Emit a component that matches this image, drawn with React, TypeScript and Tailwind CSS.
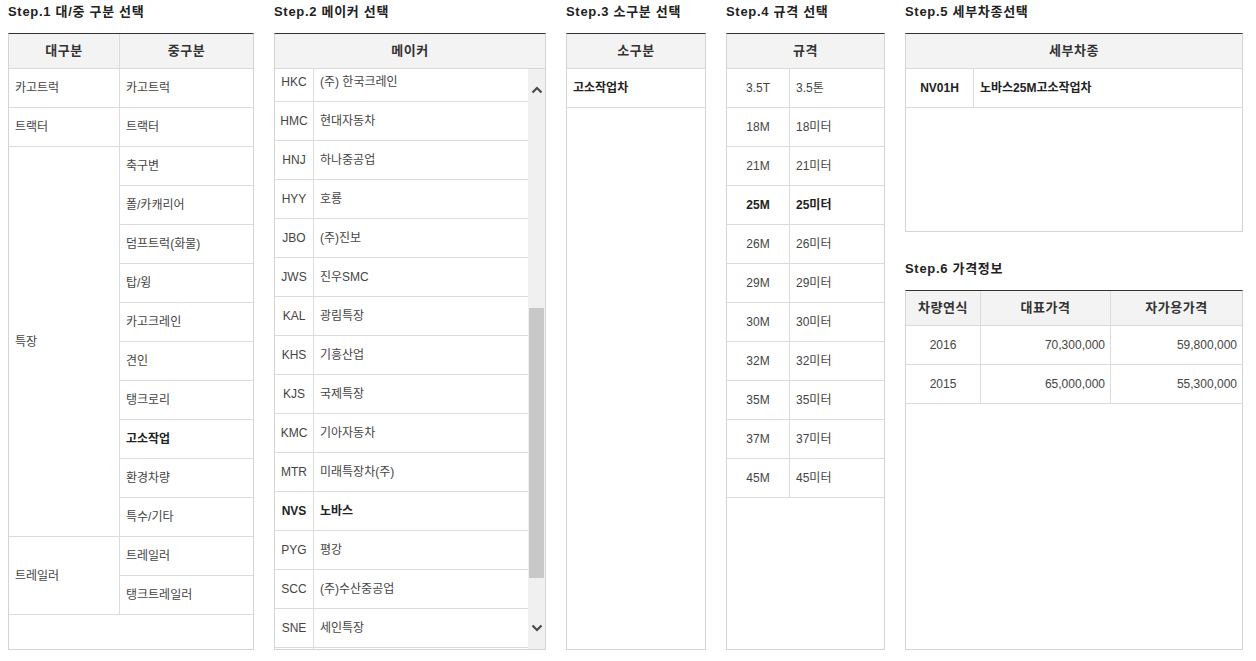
import React from "react";

const step1: { l: string; span: number; items: { t: string; b?: boolean }[] }[] = [
  { l: "카고트럭", span: 1, items: [{ t: "카고트럭" }] },
  { l: "트랙터", span: 1, items: [{ t: "트랙터" }] },
  {
    l: "특장",
    span: 10,
    items: [
      { t: "축구변" },
      { t: "폴/카캐리어" },
      { t: "덤프트럭(화물)" },
      { t: "탑/윙" },
      { t: "카고크레인" },
      { t: "견인" },
      { t: "탱크로리" },
      { t: "고소작업", b: true },
      { t: "환경차량" },
      { t: "특수/기타" },
    ],
  },
  { l: "트레일러", span: 2, items: [{ t: "트레일러" }, { t: "탱크트레일러" }] },
];

const makers: { c: string; n: string; b?: boolean }[] = [
  { c: "HKC", n: "(주) 한국크레인" },
  { c: "HMC", n: "현대자동차" },
  { c: "HNJ", n: "하나중공업" },
  { c: "HYY", n: "호룡" },
  { c: "JBO", n: "(주)진보" },
  { c: "JWS", n: "진우SMC" },
  { c: "KAL", n: "광림특장" },
  { c: "KHS", n: "기흥산업" },
  { c: "KJS", n: "국제특장" },
  { c: "KMC", n: "기아자동차" },
  { c: "MTR", n: "미래특장차(주)" },
  { c: "NVS", n: "노바스", b: true },
  { c: "PYG", n: "평강" },
  { c: "SCC", n: "(주)수산중공업" },
  { c: "SNE", n: "세인특장" },
  { c: "", n: "" },
];

const specs: { c: string; n: string; b?: boolean }[] = [
  { c: "3.5T", n: "3.5톤" },
  { c: "18M", n: "18미터" },
  { c: "21M", n: "21미터" },
  { c: "25M", n: "25미터", b: true },
  { c: "26M", n: "26미터" },
  { c: "29M", n: "29미터" },
  { c: "30M", n: "30미터" },
  { c: "32M", n: "32미터" },
  { c: "35M", n: "35미터" },
  { c: "37M", n: "37미터" },
  { c: "45M", n: "45미터" },
];

const prices = [
  { y: "2016", a: "70,300,000", b: "59,800,000" },
  { y: "2015", a: "65,000,000", b: "55,300,000" },
];

function Title({ children }: { children: React.ReactNode }) {
  return (
    <div className="h-[33px] leading-[24px] text-[13px] tracking-[0.7px] font-bold text-[#222]">{children}</div>
  );
}

function Chevron({ up }: { up?: boolean }) {
  return (
    <svg width="12" height="8" viewBox="0 0 12 8">
      <path
        d={up ? "M1.5 6.5 L6 2 L10.5 6.5" : "M1.5 1.5 L6 6 L10.5 1.5"}
        fill="none"
        stroke="#4a4a4a"
        strokeWidth="2.2"
      />
    </svg>
  );
}

export default function App() {
  return (
    <div className="w-[1256px] h-[661px] bg-white overflow-hidden [font-family:'Liberation_Sans','Noto_Sans_CJK_KR',sans-serif] text-[12px] text-[#444]">
      <div className="flex gap-[20px] pl-[8px]">
        {/* Step 1 */}
        <div className="flex flex-col w-[246px]">
          <Title>Step.1 대/중 구분 선택</Title>
          <div className="h-[617px] border border-[#d4d4d4] border-t-[#333] flex flex-col">
            <div className="flex h-[35px] bg-[#f3f3f3] border-b border-[#d9d9d9] font-bold text-[13px] tracking-[0.5px] text-[#333]">
              <div className="w-[111px] border-r border-[#dcdcdc] flex items-center justify-center">대구분</div>
              <div className="flex-1 flex items-center justify-center">중구분</div>
            </div>
            <div className="grid grid-cols-[111px_1fr] auto-rows-[39px]">
              {step1.map((g) => (
                <React.Fragment key={g.l}>
                  <div
                    className={`flex items-center pl-[6px] border-r border-b border-[#dcdcdc] ${
                      g.span === 10 ? "row-span-10" : g.span === 2 ? "row-span-2" : ""
                    }`}
                  >
                    {g.l}
                  </div>
                  {g.items.map((it) => (
                    <div
                      key={it.t}
                      className={`flex items-center pl-[6px] border-b border-[#dcdcdc] ${
                        it.b ? "font-bold text-[#222]" : ""
                      }`}
                    >
                      {it.t}
                    </div>
                  ))}
                </React.Fragment>
              ))}
            </div>
          </div>
        </div>

        {/* Step 2 */}
        <div className="flex flex-col w-[272px]">
          <Title>Step.2 메이커 선택</Title>
          <div className="h-[617px] border border-[#d4d4d4] border-t-[#333] flex flex-col">
            <div className="flex h-[35px] shrink-0 bg-[#f3f3f3] border-b border-[#d9d9d9] font-bold text-[13px] tracking-[0.5px] text-[#333] items-center justify-center">
              메이커
            </div>
            <div className="flex flex-1 min-h-0">
              <div className="flex-1 overflow-hidden">
                <div className="-mt-[6px]">
                  {makers.map((m, i) => (
                    <div
                      key={i}
                      className={`flex h-[39px] border-b border-[#dcdcdc] ${m.b ? "font-bold text-[#222]" : ""}`}
                    >
                      <div className="w-[39px] border-r border-[#dcdcdc] flex items-center justify-center">
                        {m.c}
                      </div>
                      <div className="flex-1 flex items-center pl-[6px]">{m.n}</div>
                    </div>
                  ))}
                </div>
              </div>
              <div className="w-[17px] bg-[#f0f0f0] flex flex-col">
                <div className="h-[42px] flex items-center justify-center">
                  <Chevron up />
                </div>
                <div className="h-[197px]" />
                <div className="h-[270px] mx-[1px] bg-[#c8c8c8]" />
                <div className="flex-1" />
                <div className="h-[42px] flex items-center justify-center">
                  <Chevron />
                </div>
              </div>
            </div>
          </div>
        </div>

        {/* Step 3 */}
        <div className="flex flex-col w-[140px]">
          <Title>Step.3 소구분 선택</Title>
          <div className="h-[617px] border border-[#d4d4d4] border-t-[#333] flex flex-col">
            <div className="flex h-[35px] bg-[#f3f3f3] border-b border-[#d9d9d9] font-bold text-[13px] tracking-[0.5px] text-[#333] items-center justify-center">
              소구분
            </div>
            <div className="h-[39px] border-b border-[#dcdcdc] flex items-center pl-[6px] font-bold text-[#222]">
              고소작업차
            </div>
          </div>
        </div>

        {/* Step 4 */}
        <div className="flex flex-col w-[159px]">
          <Title>Step.4 규격 선택</Title>
          <div className="h-[617px] border border-[#d4d4d4] border-t-[#333] flex flex-col">
            <div className="flex h-[35px] bg-[#f3f3f3] border-b border-[#d9d9d9] font-bold text-[13px] tracking-[0.5px] text-[#333] items-center justify-center">
              규격
            </div>
            {specs.map((s) => (
              <div
                key={s.c}
                className={`flex h-[39px] border-b border-[#dcdcdc] ${s.b ? "font-bold text-[#222]" : ""}`}
              >
                <div className="w-[63px] border-r border-[#dcdcdc] flex items-center justify-center">{s.c}</div>
                <div className="flex-1 flex items-center pl-[6px]">{s.n}</div>
              </div>
            ))}
          </div>
        </div>

        {/* Step 5 & 6 */}
        <div className="flex flex-col w-[338px]">
          <Title>Step.5 세부차종선택</Title>
          <div className="h-[199px] border border-[#d4d4d4] border-t-[#333] flex flex-col">
            <div className="flex h-[35px] bg-[#f3f3f3] border-b border-[#d9d9d9] font-bold text-[13px] tracking-[0.5px] text-[#333] items-center justify-center">
              세부차종
            </div>
            <div className="flex h-[39px] border-b border-[#dcdcdc] font-bold text-[#222]">
              <div className="w-[68px] border-r border-[#dcdcdc] flex items-center justify-center">NV01H</div>
              <div className="flex-1 flex items-center pl-[6px]">노바스25M고소작업차</div>
            </div>
          </div>
          <div className="mt-[25px]">
            <Title>Step.6 가격정보</Title>
          </div>
          <div className="h-[360px] border border-[#d4d4d4] border-t-[#333] flex flex-col">
            <div className="grid grid-cols-[75px_130px_1fr] h-[35px] bg-[#f3f3f3] border-b border-[#d9d9d9] font-bold text-[13px] tracking-[0.5px] text-[#333]">
              <div className="border-r border-[#dcdcdc] flex items-center justify-center">차량연식</div>
              <div className="border-r border-[#dcdcdc] flex items-center justify-center">대표가격</div>
              <div className="flex items-center justify-center">자가용가격</div>
            </div>
            {prices.map((p) => (
              <div key={p.y} className="grid grid-cols-[75px_130px_1fr] h-[39px] border-b border-[#dcdcdc]">
                <div className="border-r border-[#dcdcdc] flex items-center justify-center">{p.y}</div>
                <div className="border-r border-[#dcdcdc] flex items-center justify-end pr-[5px]">{p.a}</div>
                <div className="flex items-center justify-end pr-[5px]">{p.b}</div>
              </div>
            ))}
          </div>
        </div>
      </div>
    </div>
  );
}
